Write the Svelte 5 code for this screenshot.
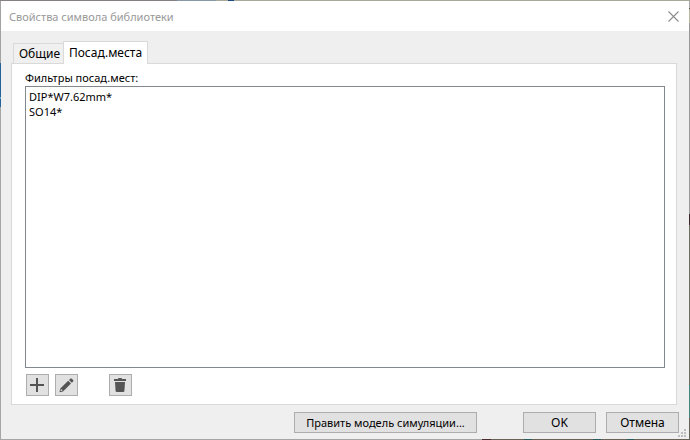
<script>
  const tabs = ['Общие', 'Посад.места'];
  let active = $state(1);
  let filters = $state(['DIP*W7.62mm*', 'SO14*']);
</script>

<div class="desktop">
  <main class="dialog" role="dialog" aria-labelledby="title">
    <header class="titlebar">
      <h1 id="title">Свойства символа библиотеки</h1>
      <button class="close" type="button" aria-label="Закрыть">
        <svg width="11" height="11" viewBox="0 0 11 11"><path d="M.5 .5l10 10M10.5 .5l-10 10" fill="none" stroke="#8c8c8c" stroke-width="1.1" /></svg>
      </button>
    </header>

    <div class="body">
      <div class="tabs" role="tablist">
        {#each tabs as tab, i}
          <button class="tab" class:active={active === i} type="button" role="tab" aria-selected={active === i} onclick={() => (active = i)}>{tab}</button>
        {/each}
      </div>

      <section class="pane" role="tabpanel">
        <label for="filters">Фильтры посад.мест:</label>
        <select id="filters" multiple>
          {#each filters as filter}
            <option>{filter}</option>
          {/each}
        </select>
        <div class="tools">
          <button class="tool" type="button" aria-label="Добавить">
            <svg width="15" height="16" viewBox="0 0 15 16"><path d="M6 1h2v6h6v2H8v6H6V9H0V7h6z" fill="#545454" /></svg>
          </button>
          <button class="tool" type="button" aria-label="Править">
            <svg width="15" height="16" viewBox="0 0 15 16" fill="#545454"><path d="M10 3l2.800 2.800 1.300-1.300q.7-.8 0-1.500L12.800 1.700q-.8-.7-1.500 0z" /><path fill-rule="evenodd" d="M9.200 3.800l2.800 2.800-8 8-3.500.6.6-3.400zM1.800 12.200l-.3 1.900 1.900-.3-.3-1.300z" /></svg>
          </button>
          <button class="tool remove" type="button" aria-label="Удалить">
            <svg width="15" height="16" viewBox="0 0 15 16" fill="#545454"><path d="M1 2h4l.5-1h3L9 2h4v2H1z" /><path d="M2 5h10l-.6 9q-.1 1-1.100 1H3.700q-1 0-1.100-1z" /></svg>
          </button>
        </div>
      </section>
    </div>

    <footer>
      <button class="push wide" type="button">Править модель симуляции...</button>
      <button class="push ok" type="button">OK</button>
      <button class="push" type="button">Отмена</button>
    </footer>
    <svg class="grip" width="8" height="8" viewBox="0 0 8 8" fill="#bdbdbd" aria-hidden="true"><path d="M6 0h2v2H6zM3 3h2v2H3zM6 3h2v2H6zM0 6h2v2H0zM3 6h2v2H3zM6 6h2v2H6z" /></svg>
  </main>
</div>

<style>
  .desktop {
    box-sizing: border-box;
    min-height: 100vh;
    padding: 1px;
    display: flex;
    font: 11px/15px "Noto Sans", "Open Sans", sans-serif;
    color: #000;
    background:
      linear-gradient(90deg, #858083 177px, #8797a8 177px 216px, #a8a99b 216px 228px, #1d4a80 228px 234px, #a8a99b 234px) top / 100% 1px no-repeat,
      linear-gradient(90deg, #a5a5a5 482px, #4a2c30 482px 491px, #666356 491px 524px, #285b5d 524px 532px, #666356 532px 593px, #285b5d 593px 601px, #666356 601px 627px, #285b5d 627px 634px, #666356 634px) bottom / 100% 1px no-repeat,
      linear-gradient(#a3a3a3 63px, #246399 63px 97px, #6ba0c5 97px 99px, #246399 99px 107px, #a5a5a5 107px) left / 1px 100% no-repeat,
      linear-gradient(#aaa 8px, #50503c 8px 9px, #b9b9a0 9px 23px, #999 23px 214px, #3c252a 214px 225px, #6e705f 225px 385px, #438481 385px 418px, #666356 418px) right / 1px 100% no-repeat;
  }
  .dialog {
    position: relative;
    flex: 1;
    min-width: 0;
    display: flex;
    flex-direction: column;
    background: #efefef;
  }
  button {
    box-sizing: border-box;
    padding: 0;
    font: inherit;
    color: inherit;
    border: 1px solid #adadad;
    border-radius: 0;
    background: #e1e1e1;
  }
  svg {
    display: block;
  }
  .titlebar {
    height: 30px;
    padding: 0 10px 0 8px;
    display: flex;
    align-items: center;
    justify-content: space-between;
    background: #fff;
  }
  h1 {
    margin: 0;
    font: inherit;
    color: #999;
  }
  .close {
    border: 0;
    background: none;
  }
  .body {
    flex: 1;
    padding: 10px 12px 0 10px;
    display: flex;
    flex-direction: column;
  }
  .tabs {
    display: flex;
    align-items: flex-end;
    padding-left: 2px;
    margin-bottom: -1px;
  }
  .tab {
    height: 21px;
    width: 51px;
    padding-left: 2px;
    border-color: #d9d9d9;
    background: #f0f0f0;
    font-size: 12px;
    white-space: nowrap;
  }
  .tab.active {
    position: relative;
    width: 85px;
    height: 23px;
    margin-left: -1px;
    padding: 0 0 2px;
    border-bottom: 0;
    background: #fff;
  }
  .pane {
    flex: 1;
    padding: 6px 11px 8px 13px;
    display: flex;
    flex-direction: column;
    border: 1px solid #d9d9d9;
    background: #fff;
  }
  label {
    margin-bottom: 1px;
  }
  select {
    flex: 1;
    box-sizing: border-box;
    width: 100%;
    padding: 2px 1px;
    font: inherit;
    color: inherit;
    border: 1px solid #828790;
    border-radius: 0;
    background: #fff;
    outline: 0;
  }
  option {
    display: flex;
    align-items: center;
    height: 15px;
    min-height: 15px;
    padding: 0 2px;
    line-height: 15px;
  }
  .tools {
    display: flex;
    gap: 6px;
    padding: 6px 1px 0;
  }
  .tool {
    width: 23px;
    height: 22px;
    display: grid;
    place-items: center;
  }
  .remove {
    margin-left: 25px;
  }
  footer {
    display: flex;
    justify-content: flex-end;
    gap: 10px;
    padding: 7px 10px 6px;
  }
  .push {
    width: 73px;
    height: 21px;
    font-size: 12px;
    line-height: 19px;
  }
  .wide {
    width: 183px;
    font-size: 11px;
  }
  .ok {
    margin-left: 36px;
  }
  .grip {
    position: absolute;
    right: 3px;
    bottom: 2px;
  }
</style>
